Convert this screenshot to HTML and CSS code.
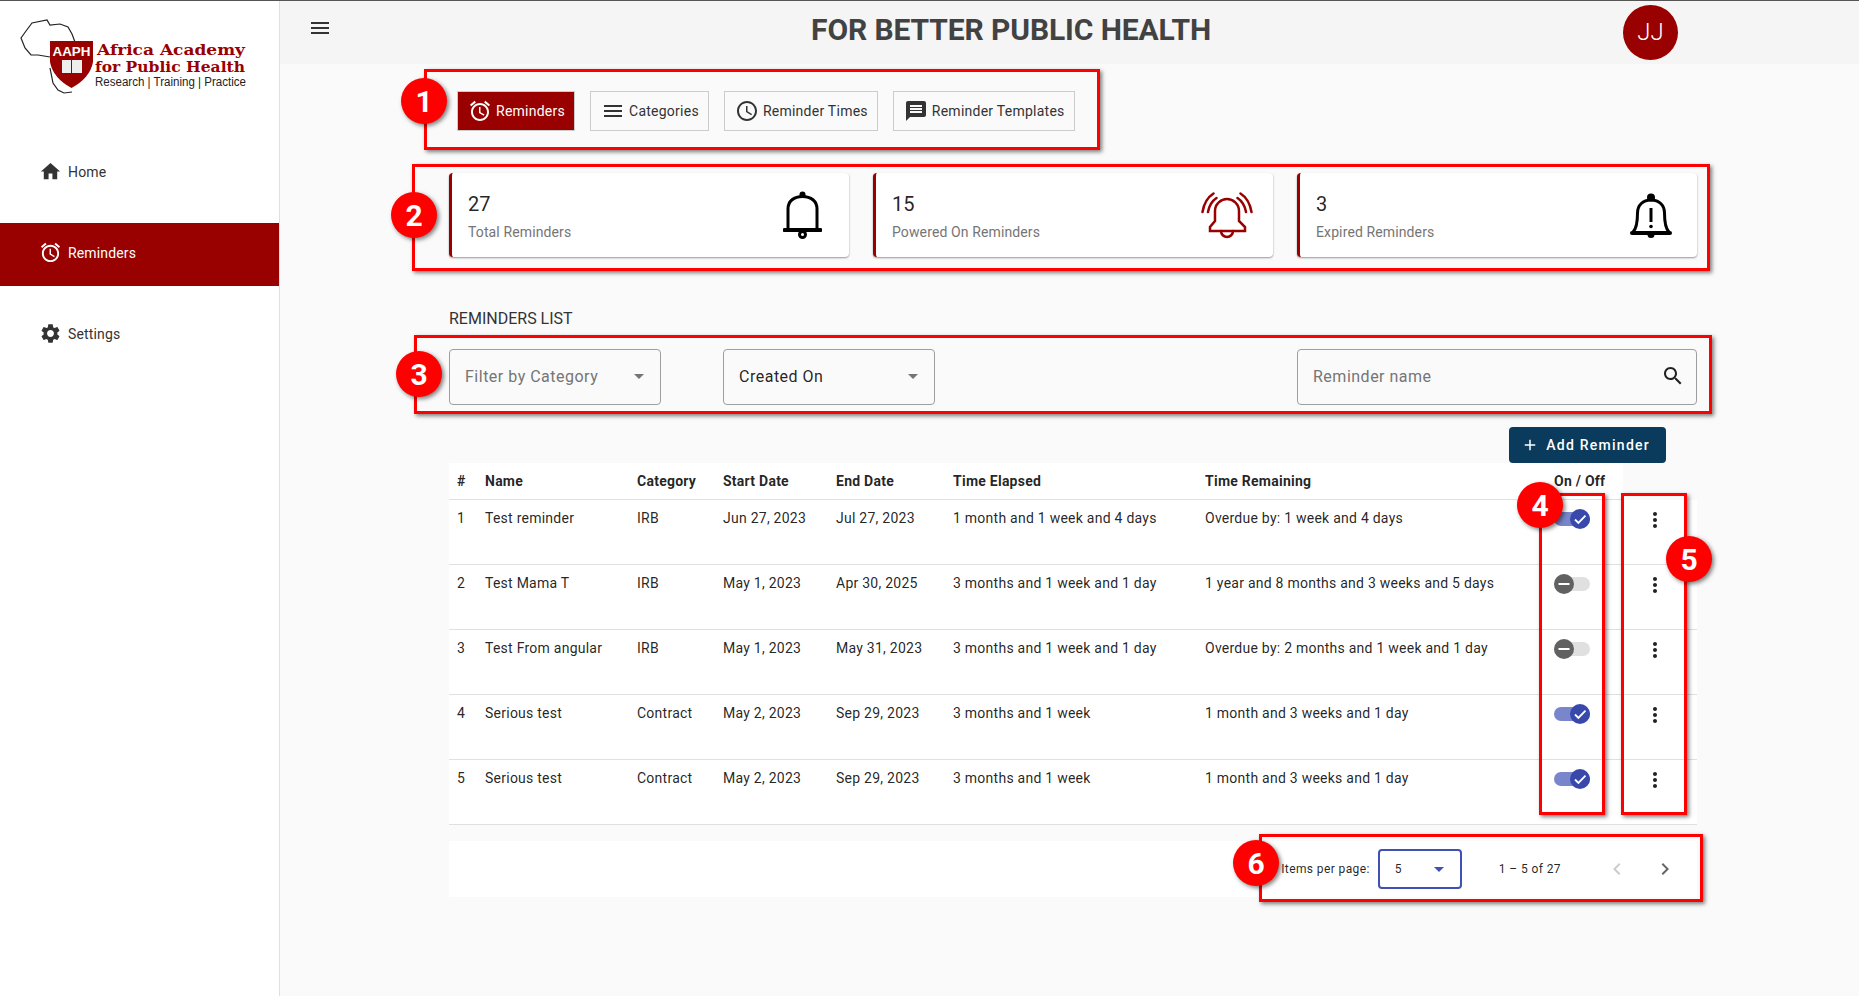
FILE: index.html
```html
<!DOCTYPE html>
<html lang="en">
<head>
    <meta charset="UTF-8">
    <meta name="viewport" content="width=device-width, initial-scale=1.0">
    <title>Reminders</title>
    <link rel="stylesheet" href="styles.css">
</head>
<body>
    <svg class="icon-defs" aria-hidden="true">
        <symbol id="i-alarm" viewBox="0 0 24 24"><path d="M22 5.72l-4.6-3.86-1.29 1.53 4.6 3.86L22 5.72zM7.88 3.39L6.6 1.86 2 5.71l1.29 1.53 4.59-3.85zM12.5 8H11v6l4.75 2.85.75-1.23-4-2.37V8zM12 4c-4.97 0-9 4.03-9 9s4.02 9 9 9c4.97 0 9-4.03 9-9s-4.03-9-9-9zm0 16c-3.87 0-7-3.13-7-7s3.13-7 7-7 7 3.13 7 7-3.13 7-7 7z"/></symbol>
        <symbol id="i-more" viewBox="0 0 24 24"><path d="M12 8c1.1 0 2-.9 2-2s-.9-2-2-2-2 .9-2 2 .9 2 2 2zm0 2c-1.1 0-2 .9-2 2s.9 2 2 2 2-.9 2-2-.9-2-2-2zm0 6c-1.1 0-2 .9-2 2s.9 2 2 2 2-.9 2-2-.9-2-2-2z"/></symbol>
        <symbol id="i-check" viewBox="0 0 20 20"><path d="M5 10.5l3.4 3.4L15.5 6.6" fill="none" stroke="#fff" stroke-width="1.8"/></symbol>
        <symbol id="i-minus" viewBox="0 0 20 20"><path d="M4.5 10h11" fill="none" stroke="#fff" stroke-width="2"/></symbol>
    </svg>

    <div class="app">
        <aside class="sidebar">
            <div class="logo">
                <svg class="logo-art" viewBox="0 0 279 100" width="279" height="100">
                    <path class="logo-map" d="M50 57 L38 55 L31 55 L25 48 L21 38 L26 31 L32 23 L47 20 L50 25 L60 24 L68 27 L72 34 L75 42 M50 68 L53 83 L58 90 L64 93 L72 92"/>
                    <path class="logo-shield" d="M50 41 H93 V62 Q90 78 71.5 88 Q53 78 50 62 Z"/>
                    <text class="logo-aaph" x="52.5" y="56" textLength="38" lengthAdjust="spacingAndGlyphs">AAPH</text>
                    <path class="logo-book" d="M62 60 H71 V73 H62 Z M72 60 H82 V73 H72 Z"/>
                    <text class="logo-name" x="97" y="55" textLength="148" lengthAdjust="spacingAndGlyphs">Africa Academy</text>
                    <text class="logo-name" x="95" y="72" textLength="150" lengthAdjust="spacingAndGlyphs">for Public Health</text>
                    <text class="logo-tag" x="95" y="86" textLength="151" lengthAdjust="spacingAndGlyphs">Research | Training | Practice</text>
                </svg>
            </div>
            <nav class="side-nav">
                <a class="side-item">
                    <svg class="side-icon" viewBox="0 0 24 24"><path d="M10 20v-6h4v6h5v-8h3L12 3 2 12h3v8z"/></svg>
                    <span>Home</span>
                </a>
                <a class="side-item active">
                    <svg class="side-icon"><use href="#i-alarm"/></svg>
                    <span>Reminders</span>
                </a>
                <a class="side-item">
                    <svg class="side-icon" viewBox="0 0 24 24"><path d="M19.14 12.94c.04-.3.06-.61.06-.94 0-.32-.02-.64-.07-.94l2.03-1.58c.18-.14.23-.41.12-.61l-1.92-3.32c-.12-.22-.37-.29-.59-.22l-2.39.96c-.5-.38-1.03-.7-1.62-.94l-.36-2.54c-.04-.24-.24-.41-.48-.41h-3.84c-.24 0-.43.17-.47.41l-.36 2.54c-.59.24-1.13.57-1.62.94l-2.39-.96c-.22-.08-.47 0-.59.22L2.74 8.87c-.12.21-.08.47.12.61l2.03 1.58c-.05.3-.09.63-.09.94s.02.64.07.94l-2.03 1.58c-.18.14-.23.41-.12.61l1.92 3.32c.12.22.37.29.59.22l2.39-.96c.5.38 1.03.7 1.62.94l.36 2.54c.05.24.24.41.48.41h3.84c.24 0 .44-.17.47-.41l.36-2.54c.59-.24 1.13-.56 1.62-.94l2.39.96c.22.08.47 0 .59-.22l1.92-3.32c.12-.22.07-.47-.12-.61l-2.01-1.58zM12 15.6c-1.98 0-3.6-1.62-3.6-3.6s1.62-3.6 3.6-3.6 3.6 1.62 3.6 3.6-1.62 3.6-3.6 3.6z"/></svg>
                    <span>Settings</span>
                </a>
            </nav>
        </aside>

        <main class="main">
            <header class="topbar">
                <div class="topbar-left">
                    <svg class="menu-icon" viewBox="0 0 24 24"><path d="M3 18h18v-2H3v2zm0-5h18v-2H3v2zm0-7v2h18V6H3z"/></svg>
                </div>
                <h1 class="page-title">FOR BETTER PUBLIC HEALTH</h1>
                <div class="avatar">JJ</div>
            </header>

            <div class="content">
                <div class="tabs">
                    <button class="tab active"><svg class="tab-icon"><use href="#i-alarm"/></svg>Reminders</button>
                    <button class="tab"><svg class="tab-icon" viewBox="0 0 24 24"><path d="M3 18h18v-2H3v2zm0-5h18v-2H3v2zm0-7v2h18V6H3z"/></svg>Categories</button>
                    <button class="tab"><svg class="tab-icon" viewBox="0 0 24 24"><path d="M11.99 2C6.47 2 2 6.48 2 12s4.47 10 9.99 10C17.52 22 22 17.52 22 12S17.52 2 11.99 2zM12 20c-4.42 0-8-3.58-8-8s3.58-8 8-8 8 3.58 8 8-3.58 8-8 8zm.5-13H11v6l5.25 3.15.75-1.23-4.5-2.67z"/></svg>Reminder Times</button>
                    <button class="tab"><svg class="tab-icon" viewBox="0 0 24 24"><path d="M20 2H4c-1.1 0-1.99.9-1.99 2L2 22l4-4h14c1.1 0 2-.9 2-2V4c0-1.1-.9-2-2-2zm-2 12H6v-2h12v2zm0-3H6V9h12v2zm0-3H6V6h12v2z"/></svg>Reminder Templates</button>
                </div>

                <div class="stats">
                    <div class="stat-card">
                        <div>
                            <div class="stat-num">27</div>
                            <div class="stat-label">Total Reminders</div>
                        </div>
                        <svg class="stat-icon bell-plain" viewBox="0 0 39 48">
                            <path d="M5 38V18C5 10 11 5.5 19.5 5.5S34 10 34 18V38"/>
                            <path class="thick" d="M1.5 39H37.5"/>
                            <circle cx="19.5" cy="43.5" r="3"/>
                            <circle class="solid" cx="19.5" cy="3.5" r="3"/>
                        </svg>
                    </div>
                    <div class="stat-card">
                        <div>
                            <div class="stat-num">15</div>
                            <div class="stat-label">Powered On Reminders</div>
                        </div>
                        <svg class="stat-icon bell-ring" viewBox="0 0 52 47">
                            <path d="M9 39V35L14 29V19C14 12 20 7 26 7S38 12 38 19V29L44 35V39Z"/>
                            <path d="M20 39a6 6 0 0 0 12 0"/>
                            <path d="M1.5 20C3 11 7 5 12.5 1.5M7 20C8 14 11 9 15.5 6"/>
                            <path d="M50.5 20C49 11 45 5 39.5 1.5M45 20C44 14 41 9 36.5 6"/>
                        </svg>
                    </div>
                    <div class="stat-card">
                        <div>
                            <div class="stat-num">3</div>
                            <div class="stat-label">Expired Reminders</div>
                        </div>
                        <svg class="stat-icon bell-alert" viewBox="0 0 42 45">
                            <path d="M3 39C7 35 7.5 28 7.5 20C7.5 12 13 7 21 7S34.5 12 34.5 20C34.5 28 35 35 39 39"/>
                            <path class="thick" d="M2 40H40"/>
                            <path class="mark" d="M21 15V29"/>
                            <circle class="solid" cx="21" cy="33.5" r="1.8"/>
                            <circle class="solid" cx="21" cy="4.5" r="4"/>
                            <circle class="solid" cx="21" cy="41.5" r="3.5"/>
                        </svg>
                    </div>
                </div>

                <h2 class="list-title">REMINDERS LIST</h2>

                <div class="filters">
                    <div class="field select placeholder">Filter by Category<span class="arrow"></span></div>
                    <div class="field select">Created On<span class="arrow"></span></div>
                    <div class="field search placeholder">Reminder name
                        <svg class="search-icon" viewBox="0 0 24 24"><path d="M15.5 14h-.79l-.28-.27C15.41 12.59 16 11.11 16 9.5 16 5.91 13.09 3 9.5 3S3 5.91 3 9.5 5.91 16 9.5 16c1.61 0 3.09-.59 4.23-1.57l.27.28v.79l5 4.99L20.49 19l-4.99-5zm-6 0C7.01 14 5 11.99 5 9.5S7.01 5 9.5 5 14 7.01 14 9.5 11.99 14 9.5 14z"/></svg>
                    </div>
                </div>

                <div class="add-row">
                    <button class="add-btn"><svg class="add-icon" viewBox="0 0 24 24"><path d="M19 13h-6v6h-2v-6H5v-2h6V5h2v6h6v2z"/></svg>Add Reminder</button>
                </div>

                <table class="reminders">
                    <colgroup>
                        <col class="c-num"><col class="c-name"><col class="c-cat"><col class="c-start"><col class="c-end"><col class="c-elapsed"><col class="c-left"><col class="c-toggle"><col class="c-more">
                    </colgroup>
                    <thead>
                        <tr><th>#</th><th>Name</th><th>Category</th><th>Start Date</th><th>End Date</th><th>Time Elapsed</th><th>Time Remaining</th><th>On / Off</th><th class="no-bg"></th></tr>
                    </thead>
                    <tbody>
                        <tr>
                            <td>1</td><td>Test reminder</td><td>IRB</td><td>Jun 27, 2023</td><td>Jul 27, 2023</td>
                            <td>1 month and 1 week and 4 days</td><td>Overdue by: 1 week and 4 days</td>
                            <td><div class="toggle on"><span class="thumb"><svg><use href="#i-check"/></svg></span></div></td>
                            <td class="more"><svg class="more-icon"><use href="#i-more"/></svg></td>
                        </tr>
                        <tr>
                            <td>2</td><td>Test Mama T</td><td>IRB</td><td>May 1, 2023</td><td>Apr 30, 2025</td>
                            <td>3 months and 1 week and 1 day</td><td>1 year and 8 months and 3 weeks and 5 days</td>
                            <td><div class="toggle"><span class="thumb"><svg><use href="#i-minus"/></svg></span></div></td>
                            <td class="more"><svg class="more-icon"><use href="#i-more"/></svg></td>
                        </tr>
                        <tr>
                            <td>3</td><td>Test From angular</td><td>IRB</td><td>May 1, 2023</td><td>May 31, 2023</td>
                            <td>3 months and 1 week and 1 day</td><td>Overdue by: 2 months and 1 week and 1 day</td>
                            <td><div class="toggle"><span class="thumb"><svg><use href="#i-minus"/></svg></span></div></td>
                            <td class="more"><svg class="more-icon"><use href="#i-more"/></svg></td>
                        </tr>
                        <tr>
                            <td>4</td><td>Serious test</td><td>Contract</td><td>May 2, 2023</td><td>Sep 29, 2023</td>
                            <td>3 months and 1 week</td><td>1 month and 3 weeks and 1 day</td>
                            <td><div class="toggle on"><span class="thumb"><svg><use href="#i-check"/></svg></span></div></td>
                            <td class="more"><svg class="more-icon"><use href="#i-more"/></svg></td>
                        </tr>
                        <tr>
                            <td>5</td><td>Serious test</td><td>Contract</td><td>May 2, 2023</td><td>Sep 29, 2023</td>
                            <td>3 months and 1 week</td><td>1 month and 3 weeks and 1 day</td>
                            <td><div class="toggle on"><span class="thumb"><svg><use href="#i-check"/></svg></span></div></td>
                            <td class="more"><svg class="more-icon"><use href="#i-more"/></svg></td>
                        </tr>
                    </tbody>
                </table>

                <div class="pager">
                    <span>Items per page:</span>
                    <div class="pager-select">5<span class="arrow"></span></div>
                    <span class="pager-range">1 – 5 of 27</span>
                    <svg class="pager-btn disabled" viewBox="0 0 24 24"><path d="M15.41 7.41L14 6l-6 6 6 6 1.41-1.41L10.83 12z"/></svg>
                    <svg class="pager-btn" viewBox="0 0 24 24"><path d="M10 6L8.59 7.41 13.17 12l-4.58 4.59L10 18l6-6z"/></svg>
                </div>
            </div>
        </main>
    </div>

    <!-- Numbered callouts drawn over the page -->
    <div class="mark-box box-1"></div>
    <div class="mark-box box-2"></div>
    <div class="mark-box box-3"></div>
    <div class="mark-box box-4"></div>
    <div class="mark-box box-5"></div>
    <div class="mark-box box-6"></div>
    <div class="mark-dot dot-1">1</div>
    <div class="mark-dot dot-2">2</div>
    <div class="mark-dot dot-3">3</div>
    <div class="mark-dot dot-4">4</div>
    <div class="mark-dot dot-5">5</div>
    <div class="mark-dot dot-6">6</div>
</body>
</html>
```

FILE: styles.css
```css
* {
    box-sizing: border-box;
}

body {
    margin: 0;
    height: 996px;
    overflow: hidden;
    position: relative;
    font-family: Roboto, "Liberation Sans", sans-serif;
    font-size: 14px;
    color: rgba(0, 0, 0, 0.87);
    background: #fafafa;
    border-top: 1px solid #555;
}

.icon-defs {
    display: none;
}

.app {
    display: flex;
    height: 995px;
}

/* Sidebar */
.sidebar {
    width: 280px;
    flex: none;
    background: #fff;
    border-right: 1px solid #e0e0e0;
}

.logo {
    height: 142px;
}

.logo-art {
    display: block;
    margin-top: -1px;
}

.logo-map {
    fill: none;
    stroke: #222;
    stroke-width: 1.2;
}

.logo-shield {
    fill: #990000;
}

.logo-book {
    fill: #eee;
}

.logo-aaph {
    font-family: "Liberation Sans", sans-serif;
    font-size: 13px;
    font-weight: bold;
    fill: #fff;
}

.logo-name {
    font-family: "DejaVu Serif", serif;
    font-size: 15.5px;
    font-weight: bold;
    fill: #990000;
}

.logo-tag {
    font-family: "Liberation Sans", sans-serif;
    font-size: 12px;
    fill: #222;
}

.side-nav {
    display: flex;
    flex-direction: column;
    gap: 18px;
}

.side-item {
    display: flex;
    align-items: center;
    gap: 6px;
    height: 63px;
    padding: 0 0 4px 39px;
    letter-spacing: 0.15px;
    color: #333;
    fill: #333;
}

.side-item.active {
    background: #990000;
    color: #fff;
    fill: #fff;
}

.side-icon {
    width: 23px;
    height: 23px;
}

/* Top bar */
.main {
    flex: 1;
    min-width: 0;
}

.topbar {
    display: flex;
    align-items: center;
    height: 63px;
    background: #f5f5f5;
}

.topbar-left {
    width: 501px;
    padding: 0 0 9px 28px;
}

.menu-icon {
    display: block;
    width: 24px;
    height: 24px;
    fill: #333;
}

.page-title {
    width: 460px;
    margin: 0 0 7px;
    text-align: center;
    font-size: 30px;
    font-weight: 700;
    letter-spacing: -0.1px;
    color: #424242;
}

.avatar {
    width: 55px;
    height: 55px;
    margin: 0 0 1px 382px;
    border-radius: 50%;
    background: #990000;
    color: #fff;
    font-size: 24px;
    font-weight: 300;
    display: flex;
    align-items: center;
    justify-content: center;
}

/* Content column */
.content {
    width: 1248px;
    margin-left: 169px;
}

.tabs {
    display: flex;
    gap: 15px;
    margin: 27px 0 0 8px;
    letter-spacing: 0.25px;
}

.tab {
    display: flex;
    align-items: center;
    gap: 4px;
    height: 40px;
    padding: 0 9px 0 10px;
    background: transparent;
    border: 1px solid #ccc;
    font: inherit;
    letter-spacing: inherit;
    color: #333;
    fill: #333;
}

.tab.active {
    background: #990000;
    color: #fff;
    fill: #fff;
}

.tab-icon {
    width: 24px;
    height: 24px;
}

.stats {
    display: flex;
    gap: 24px;
    margin-top: 42px;
}

.stat-card {
    flex: 1;
    height: 84px;
    display: flex;
    align-items: center;
    justify-content: space-between;
    padding: 0 22px 0 16px;
    background: #fff;
    border-left: 3px solid #990000;
    border-radius: 4px;
    box-shadow: 0 1px 2px rgba(0, 0, 0, 0.4);
}

.stat-num {
    font-size: 20px;
    line-height: 24px;
    margin-top: 3px;
}

.stat-label {
    margin-top: 6px;
    line-height: 20px;
    letter-spacing: 0.12px;
    color: #757575;
}

.stat-icon {
    fill: none;
    stroke: #000;
    stroke-width: 3;
}

.stat-icon .thick {
    stroke-width: 4;
    stroke-linecap: round;
}

.stat-icon .solid {
    fill: #000;
    stroke: none;
}

.stat-icon .mark {
    stroke-width: 3;
}

.bell-plain {
    width: 39px;
    height: 48px;
    margin-right: 5px;
}

.bell-ring {
    width: 52px;
    height: 47px;
    margin-right: -2px;
    stroke: #990000;
    stroke-width: 2.5;
    stroke-linecap: round;
}

.bell-alert {
    width: 42px;
    height: 45px;
    margin-right: 3px;
}

.list-title {
    margin: 52px 0 20px;
    font-size: 16px;
    font-weight: 400;
    line-height: 20px;
    color: #333;
}

/* Filters */
.filters {
    display: flex;
    gap: 62px;
}

.field {
    position: relative;
    display: flex;
    align-items: center;
    height: 56px;
    padding: 0 16px 2px 15px;
    border: 1px solid #9e9e9e;
    border-radius: 4px;
    font-size: 16px;
    letter-spacing: 0.5px;
}

.field.select {
    width: 212px;
    justify-content: space-between;
}

.field.search {
    width: 400px;
    margin-left: auto;
    justify-content: space-between;
}

.placeholder {
    color: #757575;
}

.arrow {
    width: 0;
    height: 0;
    border-left: 5px solid transparent;
    border-right: 5px solid transparent;
    border-top: 5px solid #757575;
}

.search-icon {
    width: 24px;
    height: 24px;
    margin-right: -5px;
    fill: #222;
}

.add-row {
    display: flex;
    justify-content: flex-end;
    margin-top: 22px;
    padding-right: 31px;
}

.add-btn {
    display: flex;
    align-items: center;
    gap: 7px;
    height: 36px;
    padding: 0 16px 0 12px;
    background: #0a3a5c;
    color: #fff;
    fill: #fff;
    border: none;
    border-radius: 4px;
    font: inherit;
    font-weight: 500;
    letter-spacing: 1.25px;
}

.add-icon {
    width: 18px;
    height: 18px;
}

/* Table */
.reminders {
    width: 1248px;
    table-layout: fixed;
    border-collapse: separate;
    border-spacing: 0;
    letter-spacing: 0.25px;
}

.c-num { width: 28px; }
.c-name { width: 152px; }
.c-cat { width: 86px; }
.c-start { width: 113px; }
.c-end { width: 117px; }
.c-elapsed { width: 252px; }
.c-left { width: 349px; }
.c-toggle { width: 77px; }
.c-more { width: 74px; }

.reminders th {
    height: 37px;
    padding: 0 8px;
    text-align: left;
    font-weight: 700;
    background: #fff;
    border-bottom: 1px solid #e0e0e0;
}

.reminders th.no-bg {
    background: transparent;
    border-bottom: none;
}

.reminders td {
    height: 65px;
    padding: 8px 8px 0;
    vertical-align: top;
    line-height: 20px;
    background: #fff;
    border-bottom: 1px solid #e0e0e0;
}

.reminders td.more {
    padding: 8px 0 0 20px;
}

.more-icon {
    display: block;
    width: 24px;
    height: 24px;
    fill: #222;
}

.toggle {
    position: relative;
    width: 36px;
    height: 14px;
    margin-top: 4px;
    border-radius: 7px;
    background: #e0e0e0;
}

.toggle.on {
    background: #7986cb;
}

.thumb {
    position: absolute;
    left: 0;
    top: -3px;
    width: 20px;
    height: 20px;
    border-radius: 50%;
    background: #616161;
}

.toggle.on .thumb {
    left: 16px;
    background: #3949ab;
}

.thumb svg {
    display: block;
    width: 20px;
    height: 20px;
}

/* Pagination */
.pager {
    display: flex;
    align-items: center;
    justify-content: flex-end;
    height: 56px;
    margin-top: 16px;
    padding-right: 8px;
    background: #fff;
    font-size: 12px;
    letter-spacing: 0.4px;
}

.pager-select {
    display: flex;
    align-items: center;
    justify-content: space-between;
    width: 84px;
    height: 40px;
    margin-left: 8px;
    padding: 0 16px 0 15px;
    border: 2px solid #3f51b5;
    border-radius: 4px;
}

.pager-select .arrow {
    border-top-color: #3f51b5;
}

.pager-range {
    margin: 0 32px 0 37px;
}

.pager-btn {
    width: 24px;
    height: 24px;
    margin: 0 12px;
    fill: #666;
}

.pager-btn.disabled {
    fill: #ccc;
}

/* Callouts */
.mark-box {
    position: absolute;
    border: 3px solid #f00;
    box-shadow: 2px 2px 4px rgba(0, 0, 0, 0.5);
}

.box-1 { left: 424px; top: 68px; width: 676px; height: 81px; }
.box-2 { left: 412px; top: 163px; width: 1298px; height: 107px; }
.box-3 { left: 414px; top: 334px; width: 1298px; height: 79px; }
.box-4 { left: 1539px; top: 492px; width: 66px; height: 322px; }
.box-5 { left: 1621px; top: 492px; width: 66px; height: 322px; }
.box-6 { left: 1259px; top: 833px; width: 444px; height: 68px; }

.mark-dot {
    position: absolute;
    width: 46px;
    height: 46px;
    border-radius: 50%;
    background: #f00;
    color: #fff;
    font-size: 30px;
    font-weight: 700;
    display: flex;
    align-items: center;
    justify-content: center;
    box-shadow: 2px 2px 4px rgba(0, 0, 0, 0.5);
}

.dot-1 { left: 401px; top: 77px; }
.dot-2 { left: 391px; top: 191px; }
.dot-3 { left: 396px; top: 350px; }
.dot-4 { left: 1517px; top: 481px; }
.dot-5 { left: 1666px; top: 535px; }
.dot-6 { left: 1233px; top: 839px; }
```
